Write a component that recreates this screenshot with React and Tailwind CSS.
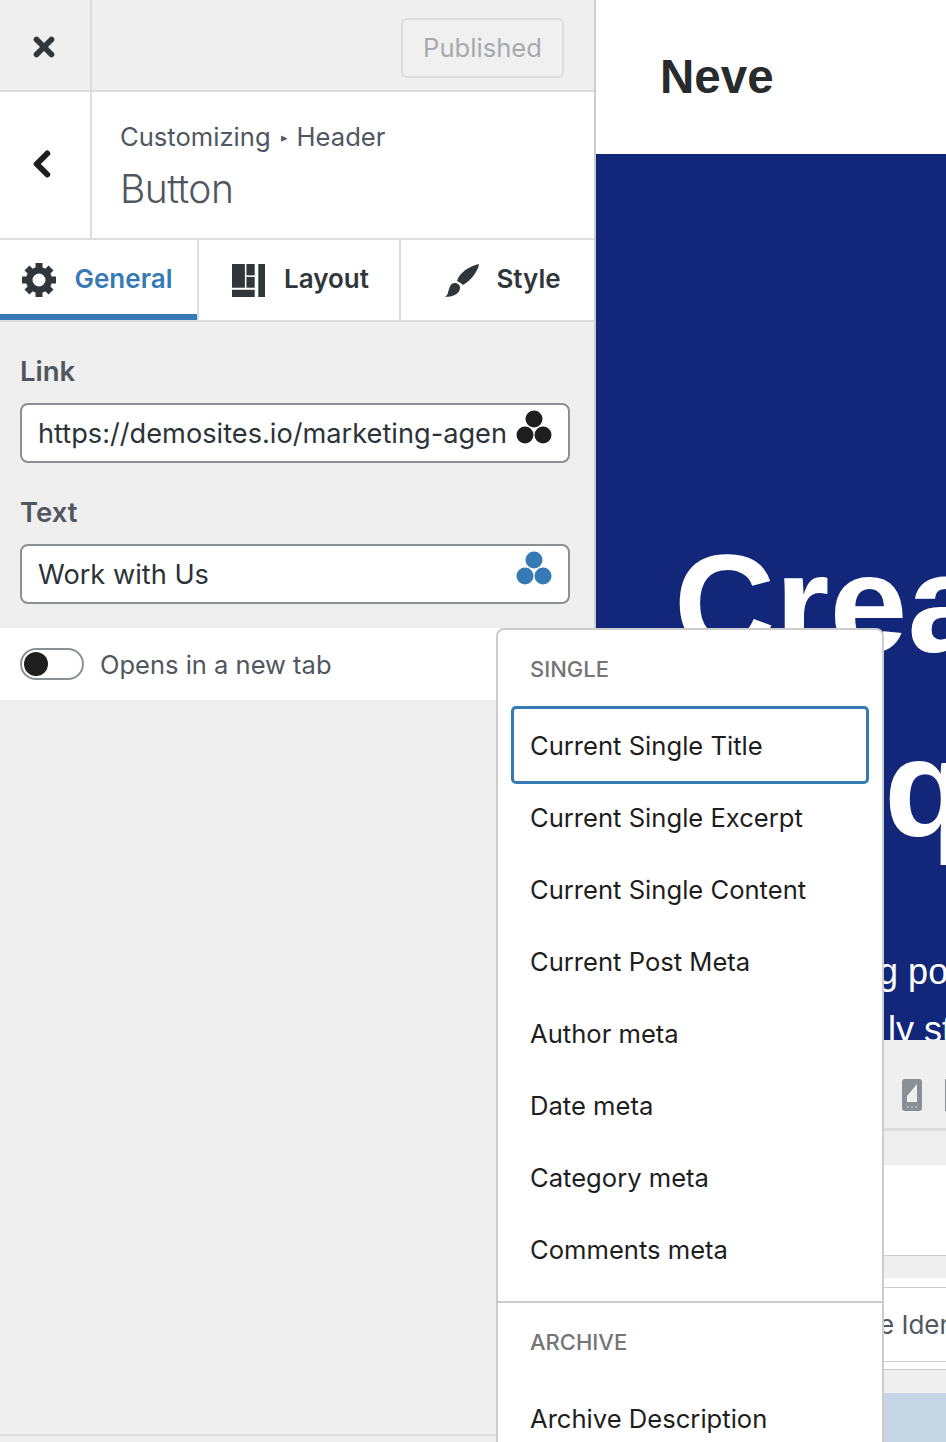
import React from 'react';
import { X, ChevronLeft } from 'lucide-react';

const FONT = 'font-["Inter","Noto_Sans",sans-serif]';

const DotsIcon = ({ className }) => (
  <svg viewBox="0 0 36 34" className={className} fill="currentColor">
    <circle cx="18" cy="9" r="8.5" />
    <circle cx="9" cy="25" r="8.5" />
    <circle cx="27" cy="25" r="8.5" />
  </svg>
);

const GearIcon = () => (
  <svg viewBox="0 0 34 34" className="h-[34px] w-[34px] shrink-0" fill="#30363a">
    {[0, 45, 90, 135, 180, 225, 270, 315].map((a) => (
      <rect key={a} x="13.5" y="0" width="7" height="8" transform={`rotate(${a} 17 17)`} />
    ))}
    <path fillRule="evenodd" d="M17 4a13 13 0 1 0 0 26a13 13 0 1 0 0-26zM17 10.5a6.5 6.5 0 1 1 0 13a6.5 6.5 0 1 1 0-13z" />
  </svg>
);

const LayoutIcon = () => (
  <svg viewBox="0 0 32 32" className="h-[33px] w-[33px] shrink-0" fill="#30363a">
    <rect x="0" y="0" width="12.5" height="23" />
    <rect x="14" y="0" width="8" height="11" />
    <rect x="14" y="12.5" width="8" height="10.5" />
    <rect x="0" y="25" width="22" height="7" />
    <rect x="25.5" y="0" width="6.5" height="32" />
  </svg>
);

const BrushIcon = () => (
  <svg viewBox="0 0 34 33" className="h-[33px] w-[34px] shrink-0" fill="#30363a">
    <path d="M34 0C33 8 25 17 18 21C16 19 14 18 12 17C14 9 24 2 34 0z" />
    <path d="M9 19C13 19 15 21 15 24C15 30 7 33 0 33C3 31 3 28 4 25C5 21 7 19 9 19z" />
  </svg>
);

const tabs = [
  { label: 'General', width: 'w-[199px]', gap: 'gap-[19px]', active: true, icon: GearIcon, pad: 'pr-[3px]' },
  { label: 'Layout', width: 'w-[202px]', gap: 'gap-[19px]', icon: LayoutIcon, pad: 'pl-[3px]' },
  { label: 'Style', width: 'flex-1', gap: 'gap-[17px]', icon: BrushIcon, pad: 'pl-[11px]' },
];

const singleItems = [
  'Current Single Excerpt',
  'Current Single Content',
  'Current Post Meta',
  'Author meta',
  'Date meta',
  'Category meta',
  'Comments meta',
];

const Field = ({ label, value, iconColor }) => (
  <div>
    <label className="block pt-[1px] text-[27.5px] leading-[33px] font-semibold text-[#50575e]">{label}</label>
    <div className="mt-[15px] flex h-[60px] items-center justify-between rounded-[8px] border-2 border-[#8c8f94] bg-white pl-[16px] pr-[16px]">
      <span className="overflow-hidden whitespace-nowrap pt-[2px] text-[27.2px] text-[#2c3338]">{value}</span>
      <DotsIcon className={`mb-[12px] h-[34px] w-[36px] shrink-0 ${iconColor}`} />
    </div>
  </div>
);

export default function App() {
  return (
    <div className={`relative flex h-[1442px] w-[946px] overflow-hidden bg-white ${FONT}`}>
      {/* Customizer sidebar */}
      <aside className="flex w-[596px] shrink-0 flex-col border-r-2 border-[#ccc] bg-[#efefef]">
        <div className="flex h-[92px] shrink-0 border-b-2 border-[#ddd]">
          <div className="flex w-[92px] items-center justify-center border-r-2 border-[#ddd] pr-[2px] pt-[4px]">
            <X size={30} strokeWidth={4.5} color="#30363a" />
          </div>
          <div className="flex flex-1 items-start justify-end pr-[30px] pt-[18px]">
            <div className="flex h-[60px] w-[163px] items-center justify-center rounded-[6px] border-2 border-[#ddd] bg-[#f0f0f0] pt-[1px] text-[25.6px] text-[#a7aaad]">
              Published
            </div>
          </div>
        </div>

        <div className="flex h-[148px] shrink-0 border-b-2 border-[#ddd] bg-white">
          <div className="flex w-[92px] items-center justify-center border-r-2 border-[#ddd] pb-[3px] pr-[6px]">
            <ChevronLeft size={42} strokeWidth={3.4} color="#1e1e1e" />
          </div>
          <div className="pl-[28px] pt-[28px] text-[#50575e]">
            <div className="flex items-center text-[25.6px] leading-[34px]">
              Customizing<span className="ml-[10px] mr-[9px] text-[13px]">▸</span>Header
            </div>
            <div className="mt-[11px] text-[39px] leading-[48px] font-light tracking-[-0.5px]">Button</div>
          </div>
        </div>

        <div className="flex h-[82px] shrink-0 border-b-2 border-[#ddd] bg-white">
          {tabs.map((tab, i) => {
            const Icon = tab.icon;
            return (
              <div
                key={tab.label}
                className={`relative flex items-center justify-center ${tab.width} ${tab.gap} ${tab.pad} ${i < 2 ? 'border-r-2 border-[#ddd]' : ''}`}
              >
                <Icon />
                <span className={`mb-[3px] text-[26px] font-semibold ${tab.active ? 'text-[#3579b5]' : 'text-[#30363a]'}`}>{tab.label}</span>
                {tab.active && <div className="absolute inset-x-0 bottom-0 h-[6px] bg-[#3579b5]" />}
              </div>
            );
          })}
        </div>

        <div className="flex flex-col gap-[32px] pl-[20px] pr-[24px] pt-[32px]">
          <Field label="Link" value="https://demosites.io/marketing-agen" iconColor="text-[#1e1e1e]" />
          <Field label="Text" value="Work with Us" iconColor="text-[#3579b5]" />
        </div>

        <div className="mt-[24px] flex h-[72px] shrink-0 items-center gap-[16px] bg-white pl-[20px]">
          <div className="flex h-[32px] w-[64px] items-center rounded-full border-2 border-[#8c8f94] pl-[2px]">
            <div className="h-[24px] w-[24px] rounded-full bg-[#1e1e1e]" />
          </div>
          <span className="pt-[2px] text-[25.5px] text-[#50575e]">Opens in a new tab</span>
        </div>

        <div className="flex-1" />
        <div className="mb-[6px] h-[2px] w-full bg-[#ddd]" />
      </aside>

      {/* Site preview */}
      <main className="flex min-w-0 flex-1 flex-col overflow-hidden">
        <div className="flex h-[154px] shrink-0 items-start pl-[64px] pt-[46px] font-['Liberation_Sans',sans-serif] text-[47.5px] leading-[62px] font-bold text-[#272b2e]">
          Neve
        </div>
        <div className="h-[886px] shrink-0 overflow-hidden bg-[#12267a] pl-[78px] pt-[358px] font-['Liberation_Sans',sans-serif] text-white">
          <div className="whitespace-nowrap text-[140px] leading-[184px] font-bold">
            Create
            <br />
            unique
          </div>
          <div className="ml-[88px] mt-[63px] whitespace-nowrap text-[36px] leading-[58px]">
            boosting power
            <br />
            <span className="ml-[126px]">ly st</span>
          </div>
        </div>
        <div className="flex h-[91px] shrink-0 items-center border-b-[3px] border-[#ddd] bg-[#efefef] pl-[306px] pt-[22px]">
          <svg viewBox="0 0 20 32" className="h-[32px] w-[20px] shrink-0">
            <rect width="20" height="32" rx="3" fill="#8c8f94" />
            <rect x="5" y="5" width="10" height="18" fill="#efefef" />
            <path d="M5 5h10l-10 12z" fill="#8c8f94" />
            <circle cx="6" cy="28" r="0.7" fill="#efefef" />
            <circle cx="10" cy="28" r="0.7" fill="#efefef" />
            <circle cx="14" cy="28" r="0.7" fill="#efefef" />
          </svg>
          <div className="ml-[23px] h-[32px] w-[20px] shrink-0 bg-[#8c8f94]" />
        </div>
        <div className="h-[34px] shrink-0 bg-[#efefef]" />
        <div className="h-[91px] shrink-0 border-b border-[#ccc] bg-white" />
        <div className="h-[22px] shrink-0 bg-[#efefef]" />
        <div className="h-[9px] shrink-0 bg-white" />
        <div className="flex h-[75px] shrink-0 items-center border-y border-[#ccc] bg-white pl-[283px] text-[26px] text-[#50575e]">
          <span className="whitespace-nowrap">e Identity</span>
        </div>
        <div className="h-[8px] shrink-0 border-b border-[#ccc] bg-white" />
        <div className="h-[23px] shrink-0 bg-[#efefef]" />
        <div className="flex-1 bg-[#c5d5e3]" />
      </main>

      {/* Dynamic tags dropdown */}
      <div className="absolute left-[496px] top-[628px] h-[830px] w-[388px] rounded-t-[8px] border-2 border-[#ccc] bg-white">
        <div className="pl-[32px] pt-[26px] text-[22px] leading-[26px] font-medium text-[#757575]">SINGLE</div>
        <div className="px-[13px] pt-[24px]">
          <div className="flex h-[78px] items-center rounded-[5px] border-[3px] border-[#3579b5] pl-[16px] pt-[2px] text-[25.6px] text-[#1e1e1e]">
            Current Single Title
          </div>
        </div>
        <div className="mt-[-2px] pl-[32px] text-[25.6px] text-[#1e1e1e]">
          {singleItems.map((item) => (
            <div key={item} className="flex h-[72px] items-center">{item}</div>
          ))}
        </div>
        <div className="mt-[15px] h-[2px] bg-[#ccc]" />
        <div className="pl-[32px] pt-[26px] text-[22px] leading-[26px] font-medium text-[#757575]">ARCHIVE</div>
        <div className="pl-[32px] pt-[45px] text-[25.6px] text-[#1e1e1e]">Archive Description</div>
      </div>
    </div>
  );
}
